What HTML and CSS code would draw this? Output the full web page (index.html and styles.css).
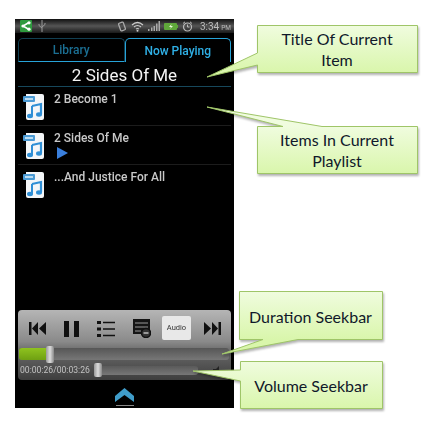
FILE: index.html
```html
<!DOCTYPE html>
<html lang="en">
<head>
  <meta charset="UTF-8">
  <title>Now Playing - annotated</title>
  <link rel="stylesheet" href="styles.css">
</head>
<body>

  <svg width="0" height="0" class="defs">
    <defs>
      <symbol id="audioFile" viewBox="0 0 23 27">
        <path d="M3 1 H19 Q21 1 21 3 V25 Q21 27 19 27 H5 Q3 27 3 25 Z" fill="#f4f6f8"/>
        <rect x="0" y="3" width="12" height="6" rx="1" fill="#4a9ad4"/>
        <rect x="2" y="5" width="8" height="2" fill="#b9dcf2"/>
        <path d="M9 13 L18 11 V21" fill="none" stroke="#2f8fd6" stroke-width="2.2"/>
        <path d="M9 13 V23" fill="none" stroke="#2f8fd6" stroke-width="2"/>
        <ellipse cx="7" cy="23" rx="3" ry="2.2" fill="#2f8fd6"/>
        <ellipse cx="16" cy="21.500" rx="3" ry="2.200" fill="#2f8fd6"/>
      </symbol>
      <linearGradient id="noteTitle" gradientUnits="userSpaceOnUse" x1="0" y1="25" x2="0" y2="73">
        <stop offset="0" stop-color="#f0fcdf"/>
        <stop offset="1" stop-color="#d9f6ab"/>
      </linearGradient>
      <linearGradient id="noteItems" gradientUnits="userSpaceOnUse" x1="0" y1="126" x2="0" y2="174">
        <stop offset="0" stop-color="#f0fcdf"/>
        <stop offset="1" stop-color="#d9f6ab"/>
      </linearGradient>
      <linearGradient id="noteDuration" gradientUnits="userSpaceOnUse" x1="0" y1="291" x2="0" y2="340">
        <stop offset="0" stop-color="#f0fcdf"/>
        <stop offset="1" stop-color="#d9f6ab"/>
      </linearGradient>
      <linearGradient id="noteVolume" gradientUnits="userSpaceOnUse" x1="0" y1="361" x2="0" y2="409">
        <stop offset="0" stop-color="#f0fcdf"/>
        <stop offset="1" stop-color="#d9f6ab"/>
      </linearGradient>
    </defs>
  </svg>

  <div class="phone">
    <div class="statusbar">
      <svg class="share" width="12" height="12" viewBox="0 0 12 12">
        <rect width="12" height="12" rx="1" fill="#2e9a3e"/>
        <path d="M9 2.500 L3 6 L9 9.500" fill="none" stroke="#fff" stroke-width="1.500"/>
        <circle cx="3" cy="6" r="1.600" fill="#fff"/>
        <circle cx="9" cy="2.800" r="1.600" fill="#fff"/>
        <circle cx="9" cy="9.200" r="1.600" fill="#fff"/>
      </svg>
      <svg class="usb" width="8" height="12" viewBox="0 0 8 12">
        <path d="M4 0 V12 M4 8 L1 5.500 V4 M4 7 L7 4.500 V3" fill="none" stroke="#999" stroke-width="1"/>
      </svg>
      <span class="status-gap"></span>
      <svg width="10" height="11" viewBox="0 0 10 11">
        <rect x="2.500" y="1.500" width="5" height="8" rx="1" transform="rotate(-20 5 5.500)" fill="none" stroke="#aaa" stroke-width="1.300"/>
      </svg>
      <svg width="13" height="11" viewBox="0 0 13 11">
        <path d="M1 4 Q6.500 -1 12 4 M3 6 Q6.500 3 10 6 M5 8 Q6.500 7 8 8" fill="none" stroke="#ccc" stroke-width="1.200"/>
        <circle cx="6.500" cy="9.800" r="1" fill="#ccc"/>
      </svg>
      <svg width="12" height="10" viewBox="0 0 12 10">
        <path d="M0 8 h1.500 v2 h-1.500z M3 6.500 h1.500 v3.500 h-1.500z M5.500 5 h1.500 v5 h-1.500z M8 2.500 h1.500 v7.500 h-1.500z M10.500 0 h1.500 v10 h-1.500z" fill="#aaa"/>
      </svg>
      <svg width="14" height="7" viewBox="0 0 14 7">
        <rect width="13" height="7" rx="1" fill="#5fa83a"/>
        <rect x="13" y="2" width="1" height="3" fill="#5fa83a"/>
        <path d="M7.500 1 L5 4 H7 L6 6 L9 3 H7 Z" fill="#e8f5d8"/>
      </svg>
      <svg width="11" height="11" viewBox="0 0 11 11">
        <circle cx="5.500" cy="6" r="4" fill="none" stroke="#bbb" stroke-width="1.200"/>
        <path d="M5.500 3.500 V6 H7.500 M1 2.500 L3 .8 M10 2.500 L8 .8" fill="none" stroke="#bbb" stroke-width="1"/>
      </svg>
      <span class="clock">3:34<small>PM</small></span>
    </div>

    <div class="tabs">
      <div class="tab">Library</div>
      <div class="tab tab-active">Now Playing</div>
    </div>

    <div class="current-title">2 Sides Of Me</div>

    <div class="playlist">
      <div class="item">
        <svg class="file-icon" width="23" height="27"><use href="#audioFile"/></svg>
        <div class="item-body">
          <div class="item-name">2 Become 1</div>
        </div>
      </div>
      <div class="item">
        <svg class="file-icon" width="23" height="27"><use href="#audioFile"/></svg>
        <div class="item-body">
          <div class="item-name">2 Sides Of Me</div>
          <div class="play-arrow"></div>
        </div>
      </div>
      <div class="item">
        <svg class="file-icon" width="23" height="27"><use href="#audioFile"/></svg>
        <div class="item-body">
          <div class="item-name">...And Justice For All</div>
        </div>
      </div>
    </div>

    <div class="controls">
      <div class="buttons">
        <svg width="17" height="13" viewBox="0 0 17 13"><path d="M0 0 H2.500 V13 H0 Z M9 0 V13 L3 6.500 Z M17 0 V13 L10 6.500 Z" fill="#111"/></svg>
        <svg width="15" height="16" viewBox="0 0 15 16"><path d="M0 0 H5 V16 H0 Z M10 0 H15 V16 H10 Z" fill="#111"/></svg>
        <svg width="18" height="16" viewBox="0 0 18 16"><path d="M0 0 H4 V3 H0 Z M0 6.500 H4 V9.500 H0 Z M0 13 H4 V16 H0 Z M6 .8 H18 V2.200 H6 Z M6 7.300 H18 V8.700 H6 Z M6 13.800 H18 V15.200 H6 Z" fill="#111"/></svg>
        <svg width="18" height="19" viewBox="0 0 18 19">
          <rect width="17" height="15" y="0" fill="#151515"/>
          <path d="M2 4 H15 M2 8 H15 M2 12 H8" stroke="#999" stroke-width="1"/>
          <circle cx="13" cy="14" r="4.500" fill="#333" stroke="#111" stroke-width="1.500"/>
          <path d="M10.500 14 H15.500" stroke="#ddd" stroke-width="1.200"/>
        </svg>
        <div class="audio-btn">Audio</div>
        <svg class="next-btn" width="17" height="13" viewBox="0 0 17 13"><path d="M0 0 L7 6.500 L0 13 Z M8 0 L14 6.500 L8 13 Z M14.500 0 H17 V13 H14.500 Z" fill="#111"/></svg>
      </div>
      <div class="seekbar">
        <div class="seek-fill"></div>
        <div class="thumb"></div>
      </div>
      <div class="volume-row">
        <span class="time">00:00:26/00:03:26</span>
        <div class="volumebar"><div class="thumb thumb-small"></div></div>
        <svg class="speaker" width="9" height="9" viewBox="0 0 9 9"><path d="M0 3 H3 L6 0 V9 L3 6 H0 Z" fill="#222"/></svg>
      </div>
    </div>

    <div class="drawer">
      <svg width="19" height="14" viewBox="0 0 19 14">
        <path d="M9.500 0 L19 8 V14 L9.500 7 L0 14 V8 Z" fill="#3f9cc9"/>
      </svg>
      <div class="drawer-line"></div>
    </div>
  </div>

  <!-- callouts drawn over the screenshot -->
  <svg class="notes" width="437" height="437" viewBox="0 0 437 437">
    <path fill="url(#noteTitle)" stroke="#9fc568" d="M257.500 25.500 H417.500 V72.500 H257.500 V65 L207 77 L257.500 53 Z"/>
    <path fill="url(#noteItems)" stroke="#9fc568" d="M257.500 126.500 H283 L207 107 L322 126.500 H417.500 V173.500 H257.500 Z"/>
    <path fill="url(#noteDuration)" stroke="#9fc568" d="M239.500 291.500 H382.500 V339.500 H298 L222 354 L263 339.500 H239.500 Z"/>
    <path fill="url(#noteVolume)" stroke="#9fc568" d="M240.500 361.500 H382.500 V408.500 H240.500 V381 L193 371 L240.500 370 Z"/>
  </svg>
  <div class="note note-title">Title Of Current<br>Item</div>
  <div class="note note-items">Items In Current<br>Playlist</div>
  <div class="note note-duration">Duration Seekbar</div>
  <div class="note note-volume">Volume Seekbar</div>

</body>
</html>
```

FILE: styles.css
```css
html, body {
  margin: 0;
  height: 437px;
  background: #fff;
  overflow: hidden;
}

body {
  position: relative;
  padding: 19px 0 0 15px;
  box-sizing: border-box;
  font-family: Roboto, "Liberation Sans", sans-serif;
}

.defs {
  position: absolute;
}

.phone {
  width: 219px;
  height: 389px;
  background: #000;
  display: flex;
  flex-direction: column;
  filter: blur(0.35px);
}

.statusbar {
  height: 14px;
  flex: none;
  display: flex;
  align-items: center;
  gap: 4px;
  padding: 0 3px 0 5px;
  background: linear-gradient(#111, #555 50%, #1a1a1a);
}

.usb {
  margin-left: 2px;
}

.status-gap {
  flex: 1;
}

.clock {
  margin-left: 3px;
  font-size: 10px;
  color: #bbb;
}

.clock small {
  font-size: 6.500px;
  margin-left: 2px;
}

.tabs {
  display: flex;
  margin: 5px 3px 0;
  height: 24px;
  flex: none;
}

.tab {
  flex: 1;
  display: flex;
  align-items: center;
  justify-content: center;
  font-size: 12px;
  font-weight: 500;
  color: #1b6f93;
  border: 1px solid #123f52;
  border-bottom: 1px solid #27a3d8;
  border-radius: 5px 5px 0 0;
}

.tab-active {
  color: #2fb0e6;
  border: 1.500px solid #27a3d8;
  border-bottom: none;
}

.current-title {
  height: 23px;
  flex: none;
  margin: 0 3px;
  padding-bottom: 1px;
  border-bottom: 1px solid #17485c;
  text-align: center;
  font-size: 17px;
  line-height: 26px;
  color: #f4f4f4;
}

.playlist {
  flex: 1;
}

.item {
  height: 38px;
  margin: 0 3px;
  display: flex;
  gap: 8px;
  padding-left: 5px;
  border-bottom: 1px solid #1c1c1c;
}

.item:last-child {
  border-bottom: none;
}

.file-icon {
  margin-top: 6px;
  flex: none;
}

.item-body {
  padding-top: 5px;
}

.item-name {
  font-size: 12px;
  font-weight: 500;
  color: #c8c8c8;
  line-height: 14px;
}

.play-arrow {
  width: 0;
  height: 0;
  margin: 2px 0 0 3px;
  border-left: 11px solid #3a7fdc;
  border-top: 6.500px solid transparent;
  border-bottom: 6.500px solid transparent;
}

.controls {
  flex: none;
  height: 70px;
  margin: 0 3px;
  border-radius: 4px;
  background: linear-gradient(#b5b5b5, #8a8a8a 45%, #666 60%, #3e3e3e);
  display: flex;
  flex-direction: column;
}

.buttons {
  height: 37px;
  flex: none;
  display: flex;
  align-items: center;
  gap: 18px;
  padding-left: 11px;
}

.audio-btn {
  width: 29px;
  height: 24px;
  margin: -2px 0 0 -7px;
  background: #e8e8e8;
  border-radius: 2px;
  display: flex;
  align-items: center;
  justify-content: center;
  font-size: 7.500px;
  color: #333;
}

.next-btn {
  margin-left: -5px;
}

.seekbar {
  position: relative;
  height: 12px;
  flex: none;
  margin: 1px 2px 0 1px;
  display: flex;
  align-items: center;
  background: linear-gradient(#565656, #777);
  border-radius: 3px;
}

.seek-fill {
  width: 28px;
  height: 12px;
  border-radius: 3px 0 0 3px;
  background: linear-gradient(#8fc31f, #6fa012);
}

.thumb {
  width: 8px;
  height: 17px;
  margin-left: -1px;
  border-radius: 2px;
  background: linear-gradient(90deg, #999, #ddd 50%, #888);
}

.volume-row {
  flex: 1;
  display: flex;
  align-items: center;
  padding: 0 9px 0 2px;
}

.time {
  font-size: 8.600px;
  color: #c2c2c2;
  width: 74px;
  flex: none;
  white-space: nowrap;
}

.volumebar {
  width: 104px;
  height: 9px;
  display: flex;
  align-items: center;
  border-radius: 3px;
  background: linear-gradient(#5a5a5a, #777);
}

.thumb-small {
  height: 14px;
  margin-left: 0;
}

.speaker {
  margin-left: auto;
}

.drawer {
  height: 28px;
  flex: none;
  display: flex;
  flex-direction: column;
  align-items: center;
  padding-top: 8px;
  box-sizing: border-box;
}

.drawer-line {
  width: 18px;
  height: 1px;
  margin-top: 3px;
  background: #888;
}

.notes {
  position: absolute;
  left: 0;
  top: 0;
  filter: drop-shadow(1px 2px 1px rgba(0, 0, 0, 0.3));
}

.note {
  position: absolute;
  display: flex;
  align-items: center;
  justify-content: center;
  text-align: center;
  font-family: Lato, "Open Sans", sans-serif;
  font-size: 16px;
  line-height: 21px;
  color: #10182a;
}

.note-title {
  left: 257px;
  top: 25px;
  width: 160px;
  height: 47px;
}

.note-items {
  left: 257px;
  top: 126px;
  width: 160px;
  height: 47px;
}

.note-duration {
  left: 239px;
  top: 292px;
  width: 143px;
  height: 48px;
}

.note-volume {
  left: 240px;
  top: 362px;
  width: 142px;
  height: 47px;
}
```
